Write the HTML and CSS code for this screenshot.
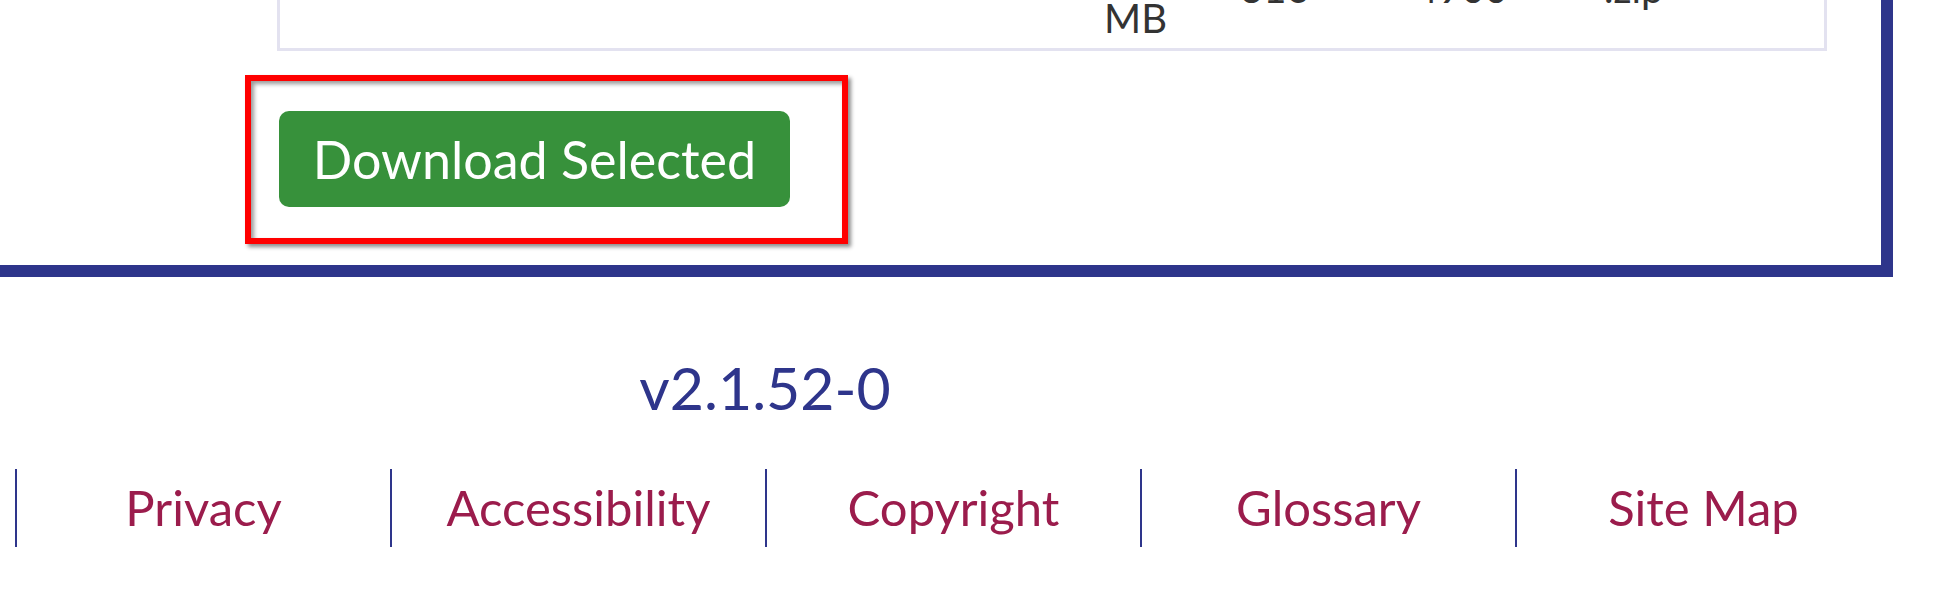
FILE: index.html
```html
<!DOCTYPE html>
<html lang="en">
<head>
<meta charset="utf-8">
<title>Download</title>
<link rel="stylesheet" href="styles.css">
</head>
<body>
<main class="panel">
  <div class="table-box">
    <div class="row">
      <div class="cell cell-name">Dataset</div>
      <div class="cell cell-size"><span class="line">316.2</span><span class="line">MB</span></div>
      <div class="cell cell-files">316</div>
      <div class="cell cell-count">4900</div>
      <div class="cell cell-type">.zip</div>
    </div>
  </div>
  <div class="actions">
    <div class="btn-wrap">
      <button class="btn" type="button">Download Selected</button>
      <span class="highlight" aria-hidden="true"></span>
    </div>
  </div>
</main>
<footer class="footer">
  <div class="version">v2.1.52-0</div>
  <ul class="links">
    <li class="link-item"><a class="link" href="#">Privacy</a></li>
    <li class="link-item"><a class="link" href="#">Accessibility</a></li>
    <li class="link-item"><a class="link" href="#">Copyright</a></li>
    <li class="link-item"><a class="link" href="#">Glossary</a></li>
    <li class="link-item"><a class="link" href="#">Site Map</a></li>
  </ul>
</footer>
</body>
</html>
```

FILE: styles.css
```css
html, body {
  margin: 0;
  padding: 0;
  background: #ffffff;
}

body {
  font-family: Lato, "Open Sans", sans-serif;
  overflow: hidden;
}

.panel {
  width: 1881px;
  border-right: 12px solid #2e358b;
  border-bottom: 12px solid #2e358b;
  padding-bottom: 58px;
}

.table-box {
  margin-top: -72px;
  margin-left: 277px;
  width: 1550px;
  box-sizing: border-box;
  border: 3px solid #e3e2f0;
  border-top: none;
}

.row {
  display: grid;
  grid-template-columns: 824px 136px 175px 189px 1fr;
  align-items: center;
  font-size: 40px;
  line-height: 60px;
  color: #333333;
}

.cell-name {
  visibility: hidden;
}

.line {
  display: block;
}

.actions {
  margin-top: 60px;
}

.btn-wrap {
  position: relative;
  width: 511px;
  margin-left: 279px;
}

.btn {
  display: block;
  width: 511px;
  height: 96px;
  padding: 0;
  border: none;
  border-radius: 10px;
  background: #37913b;
  color: #ffffff;
  font-family: Lato, "Open Sans", sans-serif;
  font-size: 52px;
  line-height: 96px;
}

.highlight {
  position: absolute;
  left: -34px;
  top: -36px;
  width: 603px;
  height: 169px;
  box-sizing: border-box;
  border: 6px solid #ff0000;
  box-shadow: 3px 3px 4px rgba(0, 0, 0, 0.45), inset 3px 3px 4px rgba(0, 0, 0, 0.4);
  pointer-events: none;
}

.footer {
  margin-top: 74px;
}

.version {
  width: 1530px;
  text-align: center;
  font-size: 59px;
  line-height: 74px;
  color: #2e358b;
}

.links {
  display: flex;
  list-style: none;
  margin: 44px 0 0 15px;
  padding: 0;
}

.link-item {
  box-sizing: border-box;
  width: 375px;
  border-left: 2px solid #2e358b;
  text-align: center;
  height: 78px;
  line-height: 76px;
  font-size: 49px;
}

.link {
  color: #9b1c4c;
  text-decoration: none;
}
```
